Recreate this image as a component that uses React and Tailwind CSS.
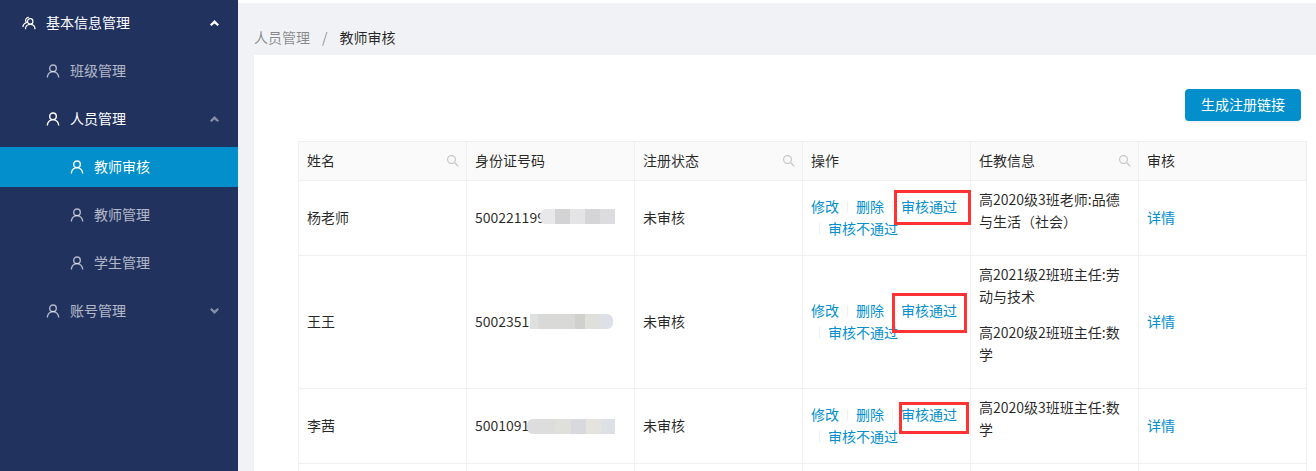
import React from 'react';

const cjk = { fontFamily: '"Noto Sans CJK SC", sans-serif' };

const UserIcon = ({ className }) => (
    <svg viewBox="0 0 14 14" width="14" height="14" fill="none" stroke="currentColor" strokeWidth="1.4" className={className}>
        <circle cx="7" cy="4.3" r="3.3" />
        <path d="M1.300 13.600c0-3.300 2.300-6 5.700-6s5.700 2.700 5.700 6" />
    </svg>
);

const TeamIcon = ({ className }) => (
    <svg viewBox="0 0 14 14" width="14" height="14" fill="none" stroke="currentColor" strokeWidth="1.2" className={className}>
        <circle cx="8.2" cy="5.4" r="2.7" />
        <path d="M3.400 13.200c0-2.900 2-4.900 4.800-4.900s4.800 2 4.800 4.900" />
        <path d="M6.800 1.400A3 3 0 0 0 3.600 4.200c0 1 .4 1.700 1 2.300C2.500 7.300 1 9 .8 11" />
    </svg>
);

const Chevron = ({ up, className }) => (
    <svg viewBox="0 0 9 6" width="9" height="6" fill="currentColor" className={className}>
        <path d={up ? 'M4.500 0L9 4.500 7.500 6l-3-2.500-3 2.500L0 4.500z' : 'M4.500 6L9 1.500 7.500 0l-3 2.500-3-2.500L0 1.500z'} />
    </svg>
);

const SearchIcon = () => (
    <svg viewBox="0 0 12 12" width="12" height="12" fill="none" stroke="#c4c4c4" strokeWidth="1.1">
        <circle cx="4.500" cy="4.500" r="3.900" />
        <path d="M7.500 7.500l3.800 3.800" />
    </svg>
);

const MenuRow = ({ level = 1, label, active, bright, chevron, team, muted }) => (
    <div className={active ? 'py-1' : ''}>
        <div
            className={`flex items-center ${active ? 'h-10 bg-[#028fcc] text-white' : bright ? 'h-12 text-white' : 'h-12 text-white/65'} ${level === 0 ? 'pl-[22px]' : level === 1 ? 'pl-[46px]' : 'pl-[70px]'} pr-[19px]`}
        >
            {team ? <TeamIcon /> : <UserIcon />}
            <span className="ml-[10px] flex-1 pb-0.5 text-sm">{label}</span>
            {chevron && <Chevron up={chevron === 'up'} className={muted ? 'text-white/45' : 'text-white'} />}
        </div>
    </div>
);

const Sidebar = () => (
    <aside className="w-[238px] shrink-0 bg-[#21325f] -mt-px">
        <MenuRow level={0} team bright label="基本信息管理" chevron="up" />
        <MenuRow label="班级管理" />
        <MenuRow bright label="人员管理" chevron="up" muted />
        <MenuRow level={2} active label="教师审核" />
        <MenuRow level={2} label="教师管理" />
        <MenuRow level={2} label="学生管理" />
        <MenuRow label="账号管理" chevron="down" muted />
    </aside>
);

const Mosaic = ({ blocks, className }) => (
    <span className={`absolute flex h-[15px] overflow-hidden ${className}`}>
        {blocks.map((b, i) => (
            <span key={i} className="h-full" style={{ width: b[0], backgroundColor: b[1] }} />
        ))}
    </span>
);

const Divider = () => <span className="mx-2 inline-block h-[0.9em] w-px bg-[#f0f0f0] align-[-0.1em]" />;

const Actions = () => (
    <div className="text-[#028fcc]">
        <a>修改</a>
        <Divider />
        <a>删除</a>
        <Divider />
        <a>审核通过</a>
        <Divider />
        <a>审核不通过</a>
    </div>
);

const rows = [
    {
        name: '杨老师',
        id: '500221199',
        info: ['高2020级3班老师:品德与生活（社会）'],
        mosaicClass: 'left-[65px] top-[3px] rounded-l-md',
        blocks: [[15, '#e8e8ea'], [15, '#d3d3d3'], [15, '#e4e4e6'], [15, '#d5d5d8'], [15, '#dcdcdf']],
    },
    {
        name: '王王',
        id: '50023511',
        info: ['高2021级2班班主任:劳动与技术', '高2020级2班班主任:数学'],
        mosaicClass: 'left-[55px] top-[4px] rounded-r-md',
        blocks: [[8, '#dfe1e1'], [37, '#d9d9d7'], [10, '#d0d0ce'], [15, '#dfdfdb'], [13, '#dde0e6']],
    },
    {
        name: '李茜',
        id: '50010911',
        info: ['高2020级3班班主任:数学'],
        mosaicClass: 'left-[52px] top-[5px] rounded-l-md',
        blocks: [[28, '#dcdddc'], [16, '#dfdfdc'], [15, '#d7d9df'], [15, '#e4e3de'], [14, '#dde0e5']],
    },
];

const thClass = 'h-[39px] border-r border-b border-[#f0f0f0] bg-[#fafafa] pl-2 pr-[7px] text-left text-sm font-normal text-black/85';
const tdClass = 'border-r border-b border-[#f0f0f0] pt-[7px] pb-[9px] px-2 align-middle text-sm leading-[22px] text-black/85';

const Head = ({ label, search }) => (
    <th className={thClass}>
        <div className="flex items-center justify-between">
            <span className="pb-0.5">{label}</span>
            {search && <SearchIcon />}
        </div>
    </th>
);

const App = () => (
    <div className="relative flex h-[471px] w-[1316px] overflow-hidden bg-white" style={cjk}>
        <Sidebar />

        <main className="flex flex-1 flex-col pt-[3px]">
            <div className="flex flex-1 flex-col bg-[#f0f2f5] pl-4">
                <div className="flex h-[52px] items-end pb-[7px] text-sm leading-[22px] text-black/45">
                    <span>人员管理</span>
                    <span className="mx-3">/</span>
                    <span className="text-black/85">教师审核</span>
                </div>

                <section className="flex-1 bg-white pl-11">
                    <div className="flex justify-end pt-[34px] pr-[15px]">
                        <button className="h-8 rounded-sm bg-[#028fcc] px-4 pb-0.5 text-sm text-white shadow-[0_2px_0_rgba(0,0,0,0.045)]">
                            生成注册链接
                        </button>
                    </div>

                    <table className="mt-5 w-[1009px] table-fixed border-separate border-spacing-0 border-t border-l border-[#f0f0f0]">
                        <thead>
                            <tr>
                                <Head label="姓名" search />
                                <Head label="身份证号码" />
                                <Head label="注册状态" search />
                                <Head label="操作" />
                                <Head label="任教信息" search />
                                <Head label="审核" />
                            </tr>
                        </thead>
                        <tbody>
                            {rows.map((row) => (
                                <tr key={row.name}>
                                    <td className={tdClass}>{row.name}</td>
                                    <td className={tdClass}>
                                        <span className="relative inline-block">
                                            {row.id}
                                            <Mosaic blocks={row.blocks} className={row.mosaicClass} />
                                        </span>
                                    </td>
                                    <td className={tdClass}>未审核</td>
                                    <td className={tdClass}>
                                        <Actions />
                                    </td>
                                    <td className={tdClass}>
                                        {row.info.map((line) => (
                                            <p key={line} className="mb-[14px]">{line}</p>
                                        ))}
                                    </td>
                                    <td className={tdClass}>
                                        <a className="text-[#028fcc]">详情</a>
                                    </td>
                                </tr>
                            ))}
                            <tr>
                                {[0, 1, 2, 3, 4, 5].map((i) => (
                                    <td key={i} className={tdClass}>&nbsp;</td>
                                ))}
                            </tr>
                        </tbody>
                    </table>
                </section>
            </div>
        </main>

        {/* red annotation boxes on the screenshot */}
        <div className="absolute left-[894px] top-[190px] h-[35px] w-[77px] border-[3px] border-[#ff3333]" />
        <div className="absolute left-[892px] top-[293px] h-[40px] w-[75px] border-[3px] border-[#ff3333]" />
        <div className="absolute left-[899px] top-[402px] h-[32px] w-[70px] border-[3px] border-[#ff3333]" />
    </div>
);

export default App;
